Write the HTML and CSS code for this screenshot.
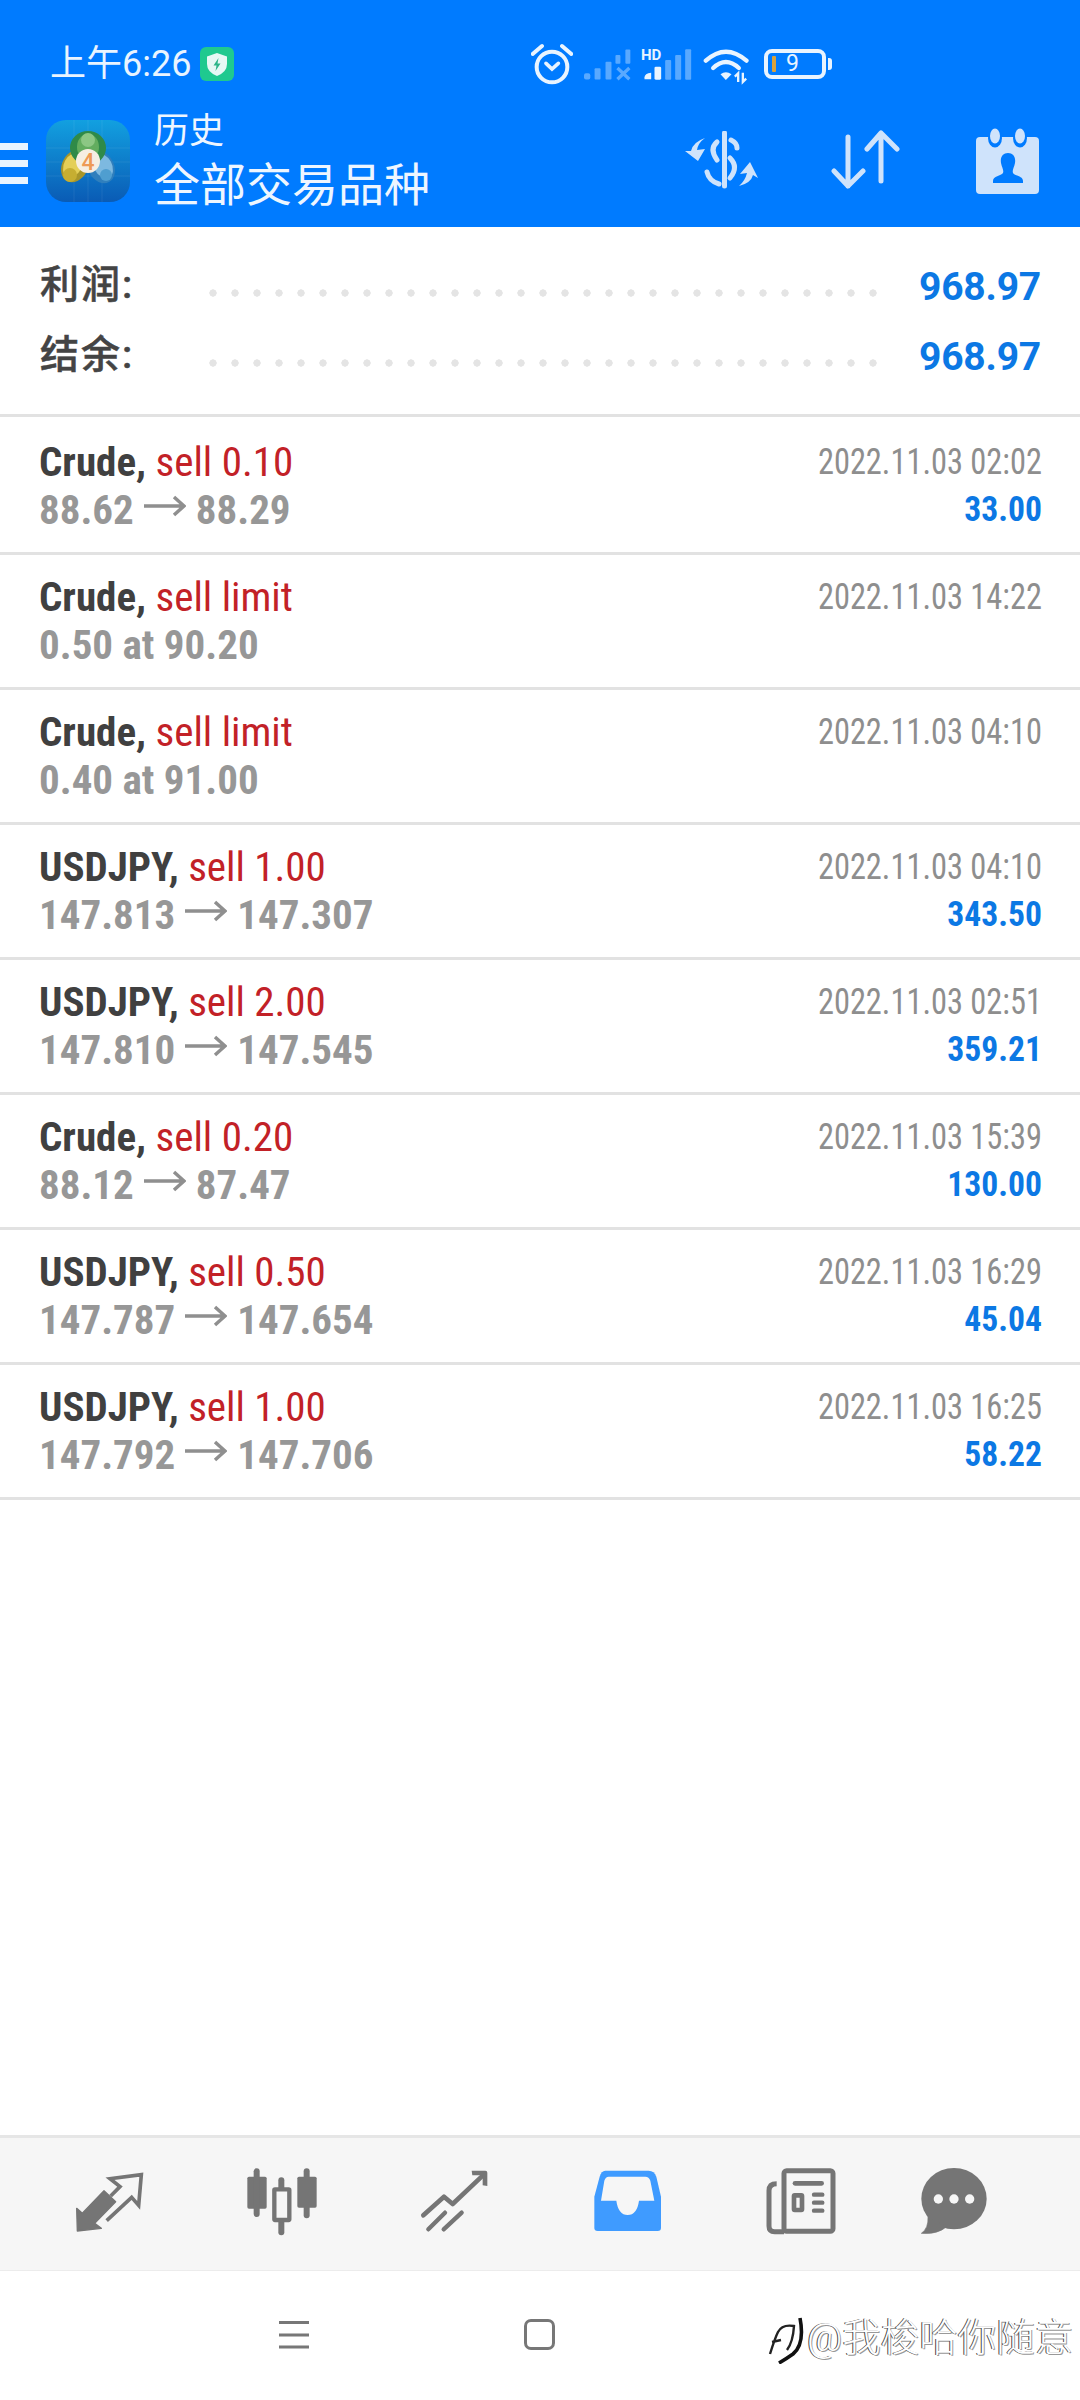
FILE: index.html
```html
<!DOCTYPE html>
<html lang="zh">
<head>
<meta charset="utf-8">
<title>历史</title>
<link rel="stylesheet" href="styles.css">
</head>
<body>
<div class="screen">
  <header class="header">
    <div class="status">
      <span class="clock">上午6:26</span>
      <svg class="vpn-badge" viewBox="0 0 34 34">
        <rect width="34" height="34" rx="6" fill="#1fc98f"/>
        <path d="M17 6 L27 9.5 V17 Q27 25 17 29 Q7 25 7 17 V9.5 Z" fill="#e6f8f5"/>
        <path d="M18.5 11 L13.5 18.5 H16.5 L15.5 24 L20.5 16.5 H17.5 Z" fill="#2db58a"/>
      </svg>
      <svg class="st-alarm" viewBox="15 0 126 150">
        <circle cx="78" cy="81" r="46" fill="none" stroke="#e9f4ff" stroke-width="12"/>
        <path d="M20 42 L48 18 M136 42 L108 18" stroke="#e9f4ff" stroke-width="12" stroke-linecap="round"/>
        <path d="M60 70 L78 87 L97 70" fill="none" stroke="#e9f4ff" stroke-width="11" stroke-linecap="round"/>
      </svg>
      <svg class="st-signal" viewBox="175 0 145 150">
        <g fill="#e9f4ff" opacity=".38">
          <rect x="175" y="100" width="19" height="19" rx="6"/>
          <rect x="207" y="85" width="18" height="34" rx="3"/>
          <rect x="240" y="65" width="18" height="54" rx="3"/>
          <rect x="270" y="45" width="15" height="26" rx="3"/>
          <rect x="300" y="28" width="15" height="43" rx="3"/>
        </g>
        <path d="M276 84 L312 118 M312 84 L276 118" stroke="#e9f4ff" stroke-width="10" opacity=".38"/>
      </svg>
      <span class="st-hd">
        <span class="hd-label">HD</span>
        <svg class="st-hd-bars" viewBox="345 0 155 150">
          <path d="M358 118 V112 Q358 100 378 98 V118 Z" fill="#e9f4ff"/>
          <rect x="388" y="80" width="20" height="39" rx="4" fill="#e9f4ff"/>
          <g fill="#e9f4ff" opacity=".38">
            <rect x="420" y="60" width="18" height="59" rx="3"/>
            <rect x="450" y="45" width="18" height="74" rx="3"/>
            <rect x="480" y="28" width="18" height="91" rx="3"/>
          </g>
        </svg>
      </span>
      <svg class="st-wifi" viewBox="535 0 140 150">
        <g fill="none" stroke="#e9f4ff" stroke-width="13" stroke-linecap="round">
          <path d="M543 62 Q603 8 665 62"/>
          <path d="M565 84 Q603 48 642 84"/>
        </g>
        <path d="M587 103 Q603 91 620 103 L603 120 Z" fill="#e9f4ff"/>
        <path d="M640 126 V100 L630 110 M654 98 V126 L664 116" fill="none" stroke="#e9f4ff" stroke-width="7"/>
      </svg>
      <span class="st-battery">
        <span class="batt-body"><span class="batt-level"></span><span class="batt-num">9</span></span>
        <span class="batt-nub"></span>
      </span>
    </div>
    <div class="appbar">
      <div class="burger"><i></i><i></i><i></i></div>
      <svg class="logo" viewBox="0 0 84 82">
        <defs>
          <linearGradient id="logoBg" x1="0" y1="0" x2="0" y2="1">
            <stop offset="0" stop-color="#12a0e0"/>
            <stop offset="1" stop-color="#0a5bb5"/>
          </linearGradient>
        </defs>
        <rect width="84" height="82" rx="20" fill="url(#logoBg)"/>
        <path d="M0 28 H84 M0 42 H84 M0 56 H84 M28 0 V82 M42 0 V82 M56 0 V82" stroke="#fff" stroke-opacity=".07"/>
        <ellipse cx="29" cy="46" rx="13" ry="17" transform="rotate(28 29 46)" fill="#a8962a"/>
        <ellipse cx="27" cy="45" rx="9" ry="13" transform="rotate(28 27 45)" fill="#e4cf58"/>
        <circle cx="24" cy="55" r="7" fill="#c6ae31"/>
        <ellipse cx="55" cy="47" rx="13" ry="17" transform="rotate(-28 55 47)" fill="#2f7fbd"/>
        <ellipse cx="57" cy="46" rx="9" ry="13" transform="rotate(-28 57 46)" fill="#7db9e0"/>
        <circle cx="60" cy="55" r="6" fill="#4f9ed0"/>
        <ellipse cx="42" cy="28" rx="18" ry="17" fill="#2f8a48"/>
        <ellipse cx="42" cy="27" rx="11" ry="13" fill="#63ad5f"/>
        <circle cx="42" cy="20" r="7" fill="#8cc784"/>
        <circle cx="42" cy="41" r="12" fill="#f6eee2"/>
        <text class="logo-digit" x="42" y="49.5">4</text>
      </svg>
      <div class="titles">
        <span class="title-top">历史</span>
        <span class="title-main">全部交易品种</span>
      </div>
      <svg class="act-money" viewBox="0 0 75 58">
        <g fill="none" stroke="#cfe3fb" stroke-linecap="round">
          <path d="M39.5 2 V55" stroke-width="5"/>
          <path d="M46 9 Q52 12 52 17" stroke-width="5"/>
          <path d="M32 11 Q24 18 32 29" stroke-width="5"/>
          <path d="M45 27 Q54 36 45 47" stroke-width="5"/>
          <path d="M22 41 Q24 50 34 53" stroke-width="5"/>
        </g>
        <path d="M20 7 Q13 12 12 19 L20 18 L13 30 L0 20 L6 20 Q8 11 20 7 Z" fill="#cfe3fb"/>
        <path d="M54 55 Q60 50 62 42 L55 43 L65 31 L73 47 L68 44 Q66 52 54 55 Z" fill="#cfe3fb"/>
      </svg>
      <svg class="act-sort" viewBox="0 0 70 60">
        <g fill="none" stroke="#cfe3fb" stroke-width="5" stroke-linecap="round" stroke-linejoin="round">
          <path d="M18 8 V57 M4 42 L18 57 L33 42"/>
          <path d="M51 52 V4 M37 20 L51 4 L67 20"/>
        </g>
      </svg>
      <svg class="act-contact" viewBox="0 0 64 66">
        <rect x="0" y="9" width="63" height="57" rx="4" fill="#cfe3fb"/>
        <ellipse cx="19" cy="10" rx="7" ry="9.5" fill="#007bff"/>
        <ellipse cx="44" cy="10" rx="7" ry="9.5" fill="#007bff"/>
        <ellipse cx="19" cy="8" rx="5" ry="7.5" fill="#cfe3fb"/>
        <ellipse cx="44" cy="8" rx="5" ry="7.5" fill="#cfe3fb"/>
        <path d="M32 25 C37 25 40 29 39 35 C38 40 36 42 37 45 C39 48 47 48 47 53 V55 H17 V53 C17 48 25 48 27 45 C28 42 26 40 25 35 C24 29 27 25 32 25 Z" fill="#007bff"/>
      </svg>
    </div>
  </header>

  <section class="summary">
    <div class="sum-row">
      <span class="sum-label">利润:</span>
      <span class="sum-dots"></span>
      <span class="sum-value">968.97</span>
    </div>
    <div class="sum-row">
      <span class="sum-label">结余:</span>
      <span class="sum-dots"></span>
      <span class="sum-value">968.97</span>
    </div>
  </section>

  <svg class="defs-holder" width="0" height="0">
    <symbol id="price-arrow" viewBox="0 0 42 22">
      <path d="M0 11 H40 M30 2 L40 11 L30 20" fill="none" stroke="currentColor" stroke-width="3.5"/>
    </symbol>
  </svg>

  <main class="orders">
    <div class="order">
      <div class="o-line"><span class="o-symbol">Crude,</span> <span class="o-side">sell 0.10</span></div>
      <div class="o-time">2022.11.03 02:02</div>
      <div class="o-line o-price">88.62<svg class="o-arrow"><use href="#price-arrow"/></svg>88.29</div>
      <div class="o-profit">33.00</div>
    </div>
    <div class="order">
      <div class="o-line"><span class="o-symbol">Crude,</span> <span class="o-side">sell limit</span></div>
      <div class="o-time">2022.11.03 14:22</div>
      <div class="o-line o-price">0.50 at 90.20</div>
      <div class="o-profit"></div>
    </div>
    <div class="order">
      <div class="o-line"><span class="o-symbol">Crude,</span> <span class="o-side">sell limit</span></div>
      <div class="o-time">2022.11.03 04:10</div>
      <div class="o-line o-price">0.40 at 91.00</div>
      <div class="o-profit"></div>
    </div>
    <div class="order">
      <div class="o-line"><span class="o-symbol">USDJPY,</span> <span class="o-side">sell 1.00</span></div>
      <div class="o-time">2022.11.03 04:10</div>
      <div class="o-line o-price">147.813<svg class="o-arrow"><use href="#price-arrow"/></svg>147.307</div>
      <div class="o-profit">343.50</div>
    </div>
    <div class="order">
      <div class="o-line"><span class="o-symbol">USDJPY,</span> <span class="o-side">sell 2.00</span></div>
      <div class="o-time">2022.11.03 02:51</div>
      <div class="o-line o-price">147.810<svg class="o-arrow"><use href="#price-arrow"/></svg>147.545</div>
      <div class="o-profit">359.21</div>
    </div>
    <div class="order">
      <div class="o-line"><span class="o-symbol">Crude,</span> <span class="o-side">sell 0.20</span></div>
      <div class="o-time">2022.11.03 15:39</div>
      <div class="o-line o-price">88.12<svg class="o-arrow"><use href="#price-arrow"/></svg>87.47</div>
      <div class="o-profit">130.00</div>
    </div>
    <div class="order">
      <div class="o-line"><span class="o-symbol">USDJPY,</span> <span class="o-side">sell 0.50</span></div>
      <div class="o-time">2022.11.03 16:29</div>
      <div class="o-line o-price">147.787<svg class="o-arrow"><use href="#price-arrow"/></svg>147.654</div>
      <div class="o-profit">45.04</div>
    </div>
    <div class="order">
      <div class="o-line"><span class="o-symbol">USDJPY,</span> <span class="o-side">sell 1.00</span></div>
      <div class="o-time">2022.11.03 16:25</div>
      <div class="o-line o-price">147.792<svg class="o-arrow"><use href="#price-arrow"/></svg>147.706</div>
      <div class="o-profit">58.22</div>
    </div>
  </main>

  <nav class="tabs">
    <svg class="tab tab-wide" viewBox="40 0 210 255">
      <path d="M48 145 L65 160 L130 92 L165 125 L102 190 L122 205 L50 213 Z" fill="#757575" stroke="#757575" stroke-width="4" stroke-linejoin="round"/>
      <path d="M150 108 L178 80 L148 56 L242 44 L234 136 L213 112 L138 182" fill="none" stroke="#757575" stroke-width="11"/>
    </svg>
    <svg class="tab tab-candles" viewBox="550 0 226 255">
      <g fill="#757575">
        <rect x="560" y="50" width="58" height="96" rx="5"/>
        <rect x="579" y="25" width="18" height="146" rx="9"/>
        <rect x="710" y="50" width="58" height="93" rx="5"/>
        <rect x="729" y="25" width="18" height="150" rx="9"/>
        <rect x="653" y="52" width="18" height="174" rx="9"/>
      </g>
      <rect x="641" y="88" width="45" height="92" fill="#f6f6f6" stroke="#757575" stroke-width="13" rx="2"/>
    </svg>
    <svg class="tab tab-trend" viewBox="1080 0 210 255">
      <g fill="none" stroke="#757575" stroke-linecap="round" stroke-linejoin="round">
        <path d="M1090 166 L1152 110 L1178 132 L1268 47" stroke-width="14"/>
        <path d="M1105 208 L1155 158 M1151 208 L1205 158" stroke-width="13"/>
      </g>
      <path d="M1235 32 H1276 Q1282 32 1282 38 V78 L1268 76 L1268 46 L1237 46 Z" fill="#757575"/>
    </svg>
    <svg class="tab tab-inbox" viewBox="32 0 220 255">
      <path d="M75 32 H205 Q222 32 228 50 L242 110 V204 Q242 213 232 213 H52 Q42 213 42 204 V110 L58 50 Q63 32 75 32 Z" fill="#3f9bff"/>
      <path d="M85 50 H195 Q206 50 210 62 L222 122 H176 Q170 165 142 165 Q114 165 108 122 H62 L72 62 Q76 50 85 50 Z" fill="#f6f6f6"/>
    </svg>
    <svg class="tab tab-news" viewBox="552 0 220 255">
      <g fill="none" stroke="#757575">
        <rect x="612" y="32" width="147" height="182" rx="8" stroke-width="15"/>
        <path d="M590 71 Q567 71 567 92 V198 Q567 215 584 215 H612" stroke-width="15"/>
        <path d="M645 70 H725" stroke-width="14" stroke-linecap="round"/>
        <path d="M702 104 H727 M702 128 H727 M702 152 H727" stroke-width="13" stroke-linecap="round"/>
        <rect x="642" y="106" width="24" height="44" stroke-width="14" rx="2"/>
      </g>
    </svg>
    <svg class="tab tab-chat" viewBox="1010 0 216 255">
      <ellipse cx="1118" cy="116" rx="98" ry="92" fill="#757575"/>
      <path d="M1040 170 Q1042 205 1020 220 Q1068 224 1096 200 Z" fill="#757575" stroke="#757575" stroke-width="2" stroke-linejoin="round"/>
      <circle cx="1071" cy="117" r="14" fill="#f6f6f6"/>
      <circle cx="1118" cy="117" r="14" fill="#f6f6f6"/>
      <circle cx="1165" cy="117" r="14" fill="#f6f6f6"/>
    </svg>
  </nav>

  <footer class="sysbar">
    <svg class="sys-menu" viewBox="0 0 30 31">
      <path d="M0 3.5 H30 M0 16 H30 M0 28 H30" stroke="#777" stroke-width="3"/>
    </svg>
    <span class="sys-home"></span>
  </footer>

  <div class="watermark">
    <svg class="wm-mark" viewBox="0 0 36 48">
      <path d="M2 38 Q7 22 10 16 Q14 8 26 10 Q25 26 19 34 M13 24 L4 26" fill="none" stroke="#222" stroke-width="2.4"/>
      <path d="M32 2 Q37 28 25 38 Q18 43 11 47" fill="none" stroke="#111" stroke-width="3.6"/>
    </svg>
    <span class="wm-text">@我梭哈你随意</span>
  </div>
</div>
</body>
</html>
```
FILE: styles.css
```css
* { box-sizing: border-box; }

html, body { margin: 0; padding: 0; background: #fff; }

.screen {
  position: relative;
  width: 1080px;
  height: 2400px;
  display: flex;
  flex-direction: column;
  overflow: hidden;
  font-family: Roboto, "Noto Sans CJK SC", sans-serif;
}

.defs-holder { position: absolute; }

/* Blue header: status strip and app toolbar */
.header { height: 227px; background: #007bff; color: #fff; flex: none; }

.status {
  height: 96px;
  padding: 40px 0 0 50px;
  display: flex;
  align-items: flex-start;
}

.clock {
  width: 139px;
  height: 50px;
  line-height: 48px;
  font-size: 36px;
  color: #e9f4ff;
  white-space: nowrap;
}

.vpn-badge { width: 34px; height: 34px; margin: 7px 0 0 11px; }

.st-alarm { width: 42px; height: 50px; margin-left: 297px; }
.st-signal { width: 48px; height: 50px; margin-left: 11px; }

.st-hd { position: relative; width: 52px; height: 50px; margin-left: 8px; }
.st-hd-bars { width: 52px; height: 50px; display: block; }
.hd-label {
  position: absolute;
  left: 1px;
  top: 8px;
  font-size: 15px;
  line-height: 14px;
  font-weight: 700;
  color: #e9f4ff;
}

.st-wifi { width: 47px; height: 50px; margin-left: 11px; }

.st-battery { display: flex; align-items: center; height: 39px; margin: 0 0 0 14px; padding-top: 9px; }
.batt-body {
  width: 62px;
  height: 30px;
  border: 4px solid #e9f4ff;
  border-radius: 8px;
  display: flex;
  align-items: center;
  position: relative;
}
.batt-level { width: 4px; height: 16px; margin-left: 4px; background: #d9a23c; border-radius: 1px; }
.batt-num {
  position: absolute;
  left: 18px;
  top: -2px;
  font-size: 23px;
  line-height: 26px;
  color: #e9f4ff;
}
.batt-nub { width: 4px; height: 12px; margin-left: 2px; background: #e9f4ff; border-radius: 0 3px 3px 0; }

.appbar { height: 131px; display: flex; align-items: flex-start; }

.burger {
  width: 28px;
  margin-top: 47px;
  display: flex;
  flex-direction: column;
  gap: 10px;
}
.burger i { display: block; height: 7px; background: #e9f4ff; }

.logo { width: 84px; height: 82px; margin: 24px 0 0 18px; flex: none; }
.logo-digit {
  font-family: Roboto, sans-serif;
  font-size: 23px;
  font-weight: 500;
  fill: #ee9a55;
  text-anchor: middle;
}

.titles { width: 410px; margin-left: 24px; display: flex; flex-direction: column; flex: none; }
.title-top { height: 46px; margin-top: 13px; font-size: 35px; line-height: 46px; color: #eef6ff; }
.title-main { margin-top: -1px; font-size: 46px; line-height: 62px; color: #eef6ff; }

.act-money { width: 75px; height: 58px; margin: 35px 0 0 121px; flex: none; }
.act-sort { width: 70px; height: 60px; margin: 33px 0 0 70px; flex: none; }
.act-contact { width: 64px; height: 66px; margin: 32px 0 0 76px; flex: none; }

/* Account summary */
.summary {
  flex: none;
  height: 190px;
  padding: 24px 39px 0 40px;
  border-bottom: 3px solid #e2e2e2;
}

.sum-row { height: 70px; display: flex; align-items: center; }

.sum-label {
  width: 162px;
  height: 70px;
  flex: none;
  margin-top: -3px;
  font-size: 39px;
  line-height: 70px;
  font-weight: 500;
  color: #444;
  letter-spacing: 2px;
  -webkit-text-stroke: .5px #444;
}

.sum-dots {
  width: 682px;
  height: 8px;
  margin-top: 14px;
  flex: none;
  background-image: radial-gradient(circle at center, #e4e4e4 3.4px, transparent 3.9px);
  background-size: 22px 8px;
  background-repeat: repeat-x;
}

.sum-value {
  flex: 1;
  padding-top: 2px;
  text-align: right;
  font-size: 39px;
  font-weight: 700;
  letter-spacing: -.2px;
  color: #0c78e4;
}

/* Order rows */
.orders { flex: none; }

.order {
  height: 135.1px;
  padding: 18px 39px 0;
  border-bottom: 3px solid #e2e2e2;
  display: grid;
  grid-template-columns: 1fr auto;
  grid-auto-rows: 48px;
  font-stretch: 75%;
}
.order:first-child { height: 137.6px; padding-top: 21px; }

.o-line { font-size: 41px; line-height: 48px; white-space: nowrap; }
.o-symbol { font-weight: 700; color: #404040; }
.o-side { font-weight: 450; color: #c22127; }
.o-price { font-weight: 700; color: #979797; }
.o-arrow { width: 42px; height: 22px; margin: 0 10px; vertical-align: 7px; color: #8f8f8f; }

.o-time {
  margin-right: -1px;
  text-align: right;
  font-size: 36px;
  line-height: 48px;
  font-weight: 400;
  color: #8e8e8e;
  transform: scaleX(.9);
  transform-origin: 100% 50%;
}
.o-profit {
  margin-right: -1px;
  text-align: right;
  font-size: 35px;
  line-height: 48px;
  font-weight: 700;
  color: #0c78e4;
  transform: scaleX(.96);
  transform-origin: 100% 50%;
}

/* Bottom tab strip */
.tabs {
  flex: none;
  margin-top: auto;
  height: 136px;
  padding: 22px 0 0 22px;
  display: grid;
  grid-template-columns: repeat(5, 173px) 133px;
  justify-items: center;
  align-items: start;
  background: #f6f6f6;
  border-top: 3px solid #e6e6e6;
  border-bottom: 1px solid #ececec;
}
.tab { height: 85px; display: block; width: 70px; }
.tab-candles { width: 75.33px; }
.tab-inbox { width: 73.33px; }
.tab-news { width: 73.33px; }
.tab-chat { width: 72px; }

/* System navigation keys */
.sysbar {
  flex: none;
  height: 129px;
  padding: 48px 0 0 279px;
  display: flex;
  align-items: flex-start;
}
.sys-menu { width: 30px; height: 31px; }
.sys-home {
  width: 31px;
  height: 31px;
  margin-left: 215px;
  border: 3px solid #777;
  border-radius: 7px;
}

/* Handle stamped over the lower corner */
.watermark {
  position: absolute;
  left: 768px;
  top: 2316px;
  display: flex;
  align-items: flex-start;
}
.wm-mark { width: 36px; height: 48px; }
.wm-text {
  margin-left: 3px;
  font-size: 38.5px;
  line-height: 44px;
  font-weight: 300;
  color: #fff;
  text-shadow: -1px 0 0 #444, 1px 1px 0 #999;
}
```
